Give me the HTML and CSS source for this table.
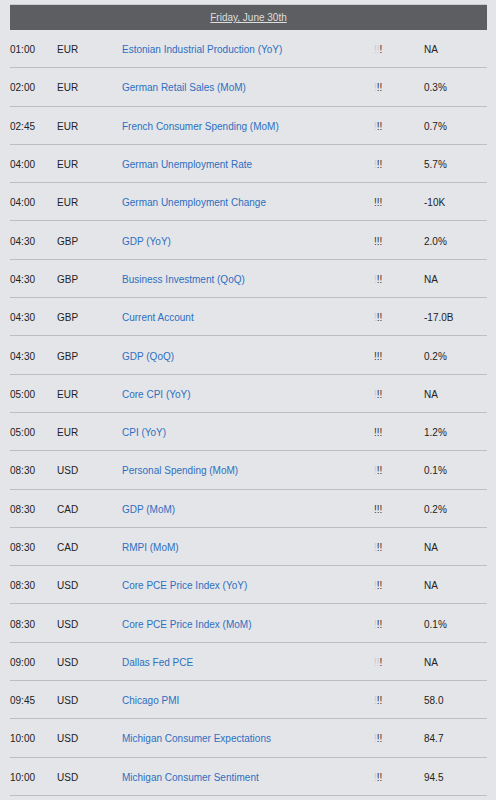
FILE: index.html
```html
<!DOCTYPE html>
<html>
<head>
<meta charset="utf-8">
<link rel="stylesheet" href="styles.css">
</head>
<body>
<div class="cal">
  <div class="day"><span class="day-title">Friday, June 30th</span></div>
  <div class="row"><span class="t">01:00</span><span class="c">EUR</span><a class="e">Estonian Industrial Production (YoY)</a><span class="imp"><i class="off">!!</i>!</span><span class="v">NA</span></div>
  <div class="row"><span class="t">02:00</span><span class="c">EUR</span><a class="e">German Retail Sales (MoM)</a><span class="imp"><i class="off">!</i>!!</span><span class="v">0.3%</span></div>
  <div class="row"><span class="t">02:45</span><span class="c">EUR</span><a class="e">French Consumer Spending (MoM)</a><span class="imp"><i class="off">!</i>!!</span><span class="v">0.7%</span></div>
  <div class="row"><span class="t">04:00</span><span class="c">EUR</span><a class="e">German Unemployment Rate</a><span class="imp"><i class="off">!</i>!!</span><span class="v">5.7%</span></div>
  <div class="row"><span class="t">04:00</span><span class="c">EUR</span><a class="e">German Unemployment Change</a><span class="imp">!!!</span><span class="v">-10K</span></div>
  <div class="row"><span class="t">04:30</span><span class="c">GBP</span><a class="e">GDP (YoY)</a><span class="imp">!!!</span><span class="v">2.0%</span></div>
  <div class="row"><span class="t">04:30</span><span class="c">GBP</span><a class="e">Business Investment (QoQ)</a><span class="imp"><i class="off">!</i>!!</span><span class="v">NA</span></div>
  <div class="row"><span class="t">04:30</span><span class="c">GBP</span><a class="e">Current Account</a><span class="imp"><i class="off">!</i>!!</span><span class="v">-17.0B</span></div>
  <div class="row"><span class="t">04:30</span><span class="c">GBP</span><a class="e">GDP (QoQ)</a><span class="imp">!!!</span><span class="v">0.2%</span></div>
  <div class="row"><span class="t">05:00</span><span class="c">EUR</span><a class="e">Core CPI (YoY)</a><span class="imp"><i class="off">!</i>!!</span><span class="v">NA</span></div>
  <div class="row"><span class="t">05:00</span><span class="c">EUR</span><a class="e">CPI (YoY)</a><span class="imp">!!!</span><span class="v">1.2%</span></div>
  <div class="row"><span class="t">08:30</span><span class="c">USD</span><a class="e">Personal Spending (MoM)</a><span class="imp"><i class="off">!</i>!!</span><span class="v">0.1%</span></div>
  <div class="row"><span class="t">08:30</span><span class="c">CAD</span><a class="e">GDP (MoM)</a><span class="imp">!!!</span><span class="v">0.2%</span></div>
  <div class="row"><span class="t">08:30</span><span class="c">CAD</span><a class="e">RMPI (MoM)</a><span class="imp"><i class="off">!</i>!!</span><span class="v">NA</span></div>
  <div class="row"><span class="t">08:30</span><span class="c">USD</span><a class="e">Core PCE Price Index (YoY)</a><span class="imp"><i class="off">!</i>!!</span><span class="v">NA</span></div>
  <div class="row"><span class="t">08:30</span><span class="c">USD</span><a class="e">Core PCE Price Index (MoM)</a><span class="imp"><i class="off">!</i>!!</span><span class="v">0.1%</span></div>
  <div class="row"><span class="t">09:00</span><span class="c">USD</span><a class="e">Dallas Fed PCE</a><span class="imp"><i class="off">!!</i>!</span><span class="v">NA</span></div>
  <div class="row"><span class="t">09:45</span><span class="c">USD</span><a class="e">Chicago PMI</a><span class="imp"><i class="off">!</i>!!</span><span class="v">58.0</span></div>
  <div class="row"><span class="t">10:00</span><span class="c">USD</span><a class="e">Michigan Consumer Expectations</a><span class="imp"><i class="off">!</i>!!</span><span class="v">84.7</span></div>
  <div class="row"><span class="t">10:00</span><span class="c">USD</span><a class="e">Michigan Consumer Sentiment</a><span class="imp"><i class="off">!</i>!!</span><span class="v">94.5</span></div>
</div>
</body>
</html>
```
FILE: styles.css
```css
html, body {
  margin: 0;
  padding: 0;
  background: #e4e5e9;
}
body {
  font-family: "Liberation Sans", Arial, sans-serif;
  font-size: 10px;
  color: #222;
}
.cal {
  margin: 4px 9px 0 10px;
  display: flex;
  flex-direction: column;
}
.day {
  height: 26px;
  box-sizing: border-box;
  border-top: 1px solid #c9cacd;
  background: #5d5e62;
  display: flex;
  align-items: center;
  justify-content: center;
}
.day-title {
  color: #dedede;
  text-decoration: underline;
}
.row {
  height: 38.3px;
  box-sizing: border-box;
  border-bottom: 1px solid #bdbec2;
  display: grid;
  grid-template-columns: 47px 65px 252px 50px 1fr;
  align-items: center;
  padding-top: 2px;
}
.e {
  color: #2d6fc0;
}
.imp {
  color: #333;
}
.off {
  font-style: normal;
  color: #c8c9cc;
}
```
